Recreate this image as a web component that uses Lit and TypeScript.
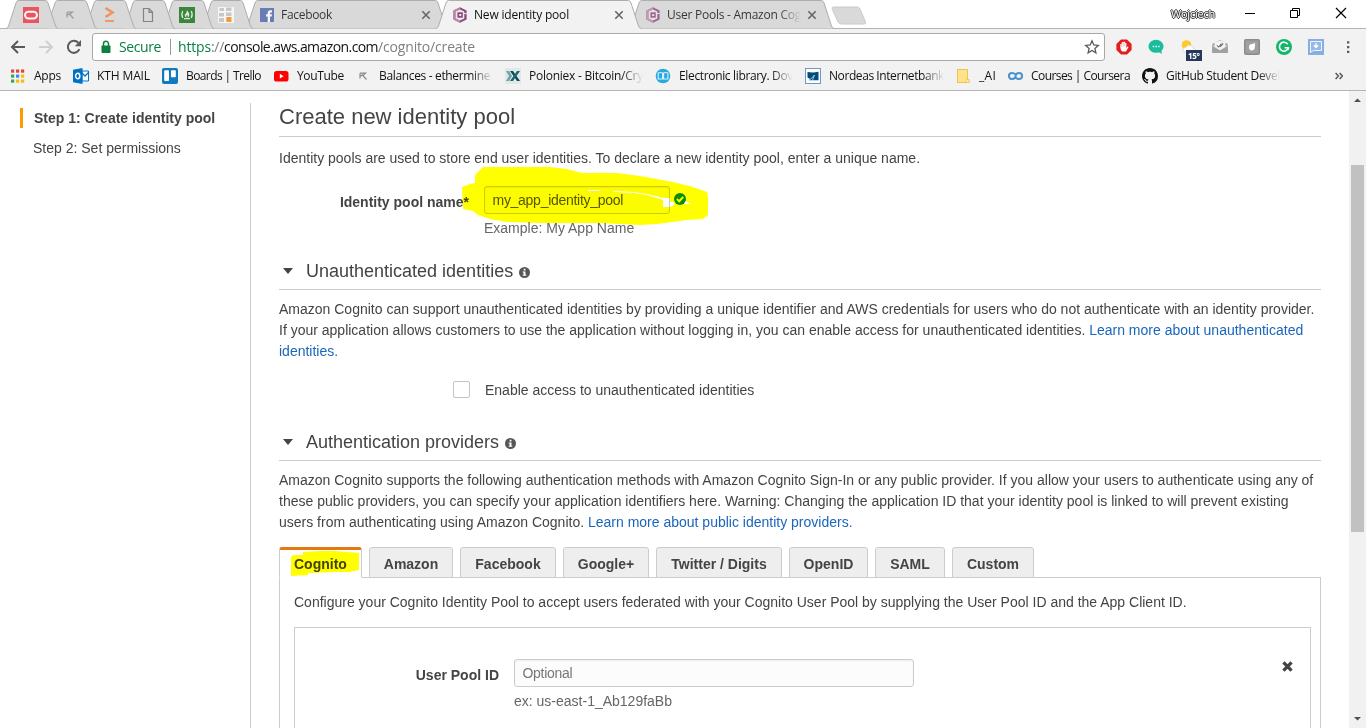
import { LitElement, html, css, svg, nothing, TemplateResult } from "lit";
import { customElement, property } from "lit/decorators.js";

/* Single-line label whose tracking is adjusted so that it spans a given width. */
@customElement("fit-label")
class FitLabel extends LitElement {
  static styles = css`
    :host { display: inline-block; white-space: pre; overflow: visible; }
    :host([fade]) {
      -webkit-mask-image: linear-gradient(to right, #000 calc(100% - 22px), transparent);
      mask-image: linear-gradient(to right, #000 calc(100% - 22px), transparent);
    }
  `;
  @property() text = "";
  @property({ type: Number }) width = 0;
  firstUpdated() {
    const s = this.renderRoot.querySelector("span") as HTMLElement;
    const natural = s.getBoundingClientRect().width;
    s.style.letterSpacing = (this.width - natural) / this.text.length + "px";
    this.style.width = this.width + "px";
  }
  render() {
    return html`<span>${this.text}</span>`;
  }
}

const cognito = svg`
  <path d="M8 .2 14.600 3.400V12.600L8 15.800 1.400 12.600V3.400Z" fill="#8a4a78"/>
  <path d="M8 .2 1.400 3.400V12.600L8 15.800V13.400L4 11.600V4.400L8 2.600Z" fill="#b98aab"/>
  <path d="M8 2.600 12.300 4.500V6H14.600V7H12.300V11.500L8 13.400 3.900 11.500V4.500Z" fill="#f0e4ec"/>
  <path d="M5.400 5.300H10.800V10.700H5.400Z" fill="#8a4a78"/>
  <path d="M7.200 7H9.200V9H7.200Z" fill="#f0e4ec"/>`;

const pick = svg`
  <path d="M5 5.200H10.500L7.800 7.500 11.500 11.500M5 5.200V10.500M5 8.500 7.800 6.500" fill="none" stroke="#8a8a8a" stroke-width="1.200"/>`;

const icons: Record<string, TemplateResult> = {
  oracle: svg`<rect width="16" height="16" fill="#f0303c"/><rect x="2" y="4.700" width="12" height="6.800" rx="3.400" fill="none" stroke="#fff" stroke-width="2"/>`,
  pick,
  prompt: svg`<path d="M4.500 1 11.500 5.500 4.500 10" fill="none" stroke="#f7803c" stroke-width="2.600"/><path d="M4 14H13" stroke="#f7803c" stroke-width="1.800"/>`,
  file: svg`<path d="M3.500 1.500H9L12.500 5V14.500H3.500ZM9 1.500V5.300H12.500" fill="none" stroke="#6b6b6b" stroke-width="1.200"/>`,
  camp: svg`<rect width="16" height="16" fill="#0f700f"/><path d="M3.800 4Q1.800 7.500 3.800 11M12.200 4Q14.200 7.500 12.200 11M5 11.700H11" fill="none" stroke="#dff0df" stroke-width="1.200"/><path d="M8 3.200Q10.800 6.400 10.200 8.800 9.700 10.400 8.600 10.600 9.500 9 8 7.800 6.800 9 7.400 10.600 5.500 10 5.700 7.800 7.800 6.500 8 3.200Z" fill="#dff0df"/>`,
  cubes: svg`<rect x="0" y="0" width="16" height="16" fill="#fff"/><path d="M1.500 1H6V4H1.500ZM8 .5H13.500V4H8ZM1 6H6V9.500H1ZM8 5.500H13.500V9H8ZM1 11H6V15H1Z" fill="#c4c4c4"/><rect x="8.300" y="10" width="5.200" height="5" fill="#f98c10"/>`,
  facebook: svg`<rect x="1" y="1" width="14" height="14" fill="#4a62ac"/><path d="M8.700 15V9.500H7V7.300H8.700V5.800Q8.700 3.300 11.200 3.300H13V5.400H11.900Q11 5.400 11 6.300V7.300H13L12.700 9.500H11V15Z" fill="#fff"/>`,
  cognito,
  apps: svg`${[0, 1, 2].map((r) => [0, 1, 2].map((c) => svg`<rect x="${1 + c * 5}" y="${1.5 + r * 5}" width="3.200" height="3.200" fill="${[["#ea4335", "#ea4335", "#ea4335"], ["#34a853", "#4285f4", "#fbbc05"], ["#34a853", "#fbbc05", "#fbbc05"]][r][c]}"/>`))}`,
  outlook: svg`<path d="M9 3H15.500V13H9Z" fill="#fff" stroke="#0072c6"/><path d="M9 5 12 8 16 4" fill="none" stroke="#0072c6" stroke-width="1.300"/><path d="M0 1.800 9.500 0V16L0 14.200Z" fill="#0072c6"/><ellipse cx="4.700" cy="8" rx="2.100" ry="2.700" fill="none" stroke="#fff" stroke-width="1.500"/>`,
  trello: svg`<rect width="16" height="16" rx="2" fill="#0f7abf"/><rect x="2.200" y="2.200" width="4.800" height="10.800" rx=".8" fill="#fff"/><rect x="9" y="2.200" width="4.800" height="7" rx=".8" fill="#fff"/>`,
  youtube: svg`<rect x="1" y="3" width="14.500" height="10.500" rx="2.600" fill="#f00"/><path d="M6.800 5.800 10.600 8.200 6.800 10.600Z" fill="#fff"/>`,
  polo: svg`<rect width="16" height="16" fill="#dfe9ea"/><path d="M1 3H4L7 8 4 13H1L4 8Z" fill="#6fa3a4"/><path d="M5 3H8L15 13H12Z" fill="#0c4a50"/><path d="M12 3H15L8 13H5Z" fill="#19666b"/>`,
  library: svg`<circle cx="8" cy="8" r="7.300" fill="#2aa9e0"/><path d="M3.200 5Q5.500 4 7.600 5V11H3.200ZM8.600 5Q10.700 4 12.900 5V11H8.600Z" fill="none" stroke="#d8f1fb" stroke-width="1.100"/>`,
  nordea: svg`<rect x=".5" y=".5" width="15" height="15" fill="#fff" stroke="#7098c0"/><path d="M2.500 4Q8 5 13.500 3.800V12.300H3.800L5 11 2.500 9.500Z" fill="#004b80"/><path d="M3 11 5.500 11.300 9.500 7 7.500 12.300" fill="none" stroke="#cfe0ee" stroke-width=".8"/>`,
  folder: svg`<path d="M2.500 1.500H12.500V11.500H14V14.500H2.500Z" fill="#ffe38a" stroke="#edc34c"/><path d="M11 11.500H14V14.500H11Z" fill="#ffe9a3" stroke="#edc34c" stroke-width=".7"/>`,
  coursera: svg`<path d="M8.700 6.400Q7 4.900 5 4.900A3.100 3.100 0 0 0 5 11.100Q6.800 11.100 8.200 9.300 L9 6.900Q9.800 4.900 12 4.900A3 3 0 0 1 12 11.100Q10 11.100 8.600 9.400" fill="none" stroke="#4c92cf" stroke-width="2"/>`,
  github: svg`<path fill="#111" d="M8 0C3.580 0 0 3.580 0 8c0 3.540 2.290 6.530 5.470 7.590.4.070.55-.17.55-.38 0-.19-.01-.82-.01-1.490-2.010.37-2.530-.49-2.690-.94-.09-.23-.48-.94-.82-1.130-.28-.15-.68-.52-.01-.53.63-.01 1.080.58 1.230.82.72 1.210 1.870.87 2.330.66.07-.52.28-.87.51-1.070-1.780-.2-3.640-.89-3.640-3.950 0-.87.31-1.590.82-2.150-.08-.2-.36-1.020.08-2.120 0 0 .67-.21 2.200.82.64-.18 1.320-.27 2-.27s1.360.09 2 .27c1.530-1.040 2.200-.82 2.200-.82.44 1.100.16 1.920.08 2.120.51.56.82 1.270.82 2.150 0 3.070-1.870 3.750-3.650 3.950.29.25.54.73.54 1.480 0 1.070-.01 1.930-.01 2.200 0 .21.15.46.55.38A8.010 8.010 0 0 0 16 8c0-4.420-3.580-8-8-8z"/>`,
  back: svg`<path d="M15 8H2.500M8 2 2 8 8 14" fill="none" stroke="#5a5a5a" stroke-width="2"/>`,
  forward: svg`<path d="M1 8H13.500M8 2 14 8 8 14" fill="none" stroke="#cfcfcf" stroke-width="2"/>`,
  reload: svg`<path d="M13.400 10.200A6 6 0 1 1 12.300 3.800" fill="none" stroke="#5a5a5a" stroke-width="2"/><path d="M15 1V7.200H8.800Z" fill="#5a5a5a"/>`,
  lock: svg`<rect x="3.500" y="6.500" width="9" height="7.500" rx=".8" fill="#0b8043"/><path d="M5.500 7V4.800A2.500 2.500 0 0 1 10.500 4.800V7" fill="none" stroke="#0b8043" stroke-width="1.500"/>`,
  star: svg`<path d="M8 1.800 9.800 6 14.300 6.400 10.900 9.400 11.900 13.900 8 11.500 4.100 13.900 5.100 9.400 1.700 6.400 6.200 6Z" fill="none" stroke="#5a5a5a" stroke-width="1.300"/>`,
  adblock: svg`<path d="M5 .4H11L15.600 5V11L11 15.600H5L.4 11V5Z" fill="#e31e1e"/><path d="M4.300 8V5.200Q5.200 4.200 5.700 5.200V3.500Q6.600 2.500 7.300 3.500V3Q8.200 2.200 8.900 3V4Q9.800 3.200 10.400 4.200V9L11.600 7.600Q12.800 7.500 12.300 8.600L10 12.600H6.200Q4.300 11 4.300 8Z" fill="#fff"/><path d="M5.700 5V8M7.300 4V7.500M8.900 4V7.500" stroke="#e88" stroke-width=".5"/>`,
  chat: svg`<ellipse cx="8" cy="7.300" rx="7.500" ry="6.500" fill="#1abc9c"/><path d="M9 12 14 15 12.500 9Z" fill="#1abc9c"/><path d="M4.700 6.700H6.300V8.300H4.700ZM7.400 6.700H9V8.300H7.400ZM10.100 6.700H11.700V8.300H10.100Z" fill="#d9f7ef"/>`,
  mail: svg`<path d="M.3 5 8 1 15.700 5V14H.3Z" fill="#9a9a9a"/><path d="M2.500 3.500 8 1.500 13.500 3.500V8L8 11.500 2.500 8Z" fill="#f3f3f3"/><path d="M4.800 6.300 6.700 8 9.500 4.500M8 7.800 11.200 4.500" fill="none" stroke="#777" stroke-width="1.100"/><path d="M.3 6.500 8 11 15.700 6.500V14H.3Z" fill="#a0a0a0"/><path d="M.5 6.500 8 11 15.500 6.500" stroke="#eee" fill="none" stroke-width=".8"/>`,
  leaf: svg`<rect width="16" height="16" rx="2" fill="#8b8b8b"/><rect x="1.500" y="1.500" width="13" height="13" rx="1" fill="#a0a0a0"/><path d="M5.200 9.800Q4.300 5 8 5 10 4.500 11 4 11.800 11.800 7.300 11.500 5.700 11.300 5.200 9.800Z" fill="#fff"/>`,
  grammar: svg`<circle cx="8" cy="8" r="8" fill="#12b76a"/><path d="M11.700 5.200A4.500 4.500 0 1 0 12.300 8.800H8.600" fill="none" stroke="#fff" stroke-width="1.600"/><path d="M10.600 8.800 12.800 11.200 13.300 8.600Z" fill="#fff"/>`,
  download: svg`<rect width="16" height="16" fill="#87aee0"/><path d="M2.500 2.500H13.500V11.500H5.500L2.500 13.500Z" fill="#95b8e6" stroke="#f0f6fd"/><path d="M8 4V8M5.800 6.300 8 8.500 10.200 6.300" fill="none" stroke="#fff" stroke-width="1.300"/>`,
  dots: svg`<path d="M7 2.300H9.300V4.600H7ZM7 7H9.300V9.300H7ZM7 11.700H9.300V14H7Z" fill="#5a5a5a"/>`,
  info: svg`<circle cx="8" cy="8" r="8" fill="#555"/><path d="M6.800 2.700H9.400V5H6.800ZM5.300 6.400H9.400V11.200H10.700V12.900H5.300V11.200H6.600V8H5.300Z" fill="#fff"/>`,
  cross: svg`<path d="M3 3 13 13M13 3 3 13" stroke="#444" stroke-width="4"/>`,
  tabclose: svg`<path d="M4.300 4.300 11.700 11.700M11.700 4.300 4.300 11.700" stroke="#666" stroke-width="1.600"/>`,
  check: svg`<circle cx="8" cy="8" r="8" fill="#0a8f1c"/><path d="M3.800 8 7 11 12.300 5.200" fill="none" stroke="#fff" stroke-width="2.600"/>`,
};

const icon = (name: string, cls = "i16") =>
  html`<svg class="ic ${cls}" viewBox="0 0 16 16">${icons[name]}</svg>`;

interface Tab { icon: string; w: number; kind: string; title?: string; tw?: number; fade?: boolean; active?: boolean }
const tabs: Tab[] = [
  ...["oracle", "pick", "prompt", "file", "camp", "cubes"].map((icon) => ({ icon, w: 52, kind: "pinned" })),
  { icon: "facebook", w: 203, kind: "wide first", title: "Facebook", tw: 51 },
  { icon: "cognito", w: 205, kind: "wide active", title: "New identity pool", tw: 95, active: true },
  { icon: "cognito", w: 205, kind: "wide", title: "User Pools - Amazon Cog", tw: 134, fade: true },
];

const bookmarks: [string, string, number, number, boolean][] = [
  ["apps", "Apps", 63, 27, false],
  ["outlook", "KTH MAIL", 89, 53, false],
  ["trello", "Boards | Trello", 111, 75, false],
  ["youtube", "YouTube", 82, 47, false],
  ["pick", "Balances - ethermine.", 150, 114, true],
  ["polo", "Poloniex - Bitcoin/Cry", 150, 114, true],
  ["library", "Electronic library. Dov", 150, 114, true],
  ["nordea", "Nordeas Internetbank", 150, 115, true],
  ["folder", "_AI", 52, 17, false],
  ["coursera", "Courses | Coursera", 135, 99, false],
  ["github", "GitHub Student Devel", 150, 114, true],
];

@customElement("browser-chrome")
class BrowserChrome extends LitElement {
  static styles = css`
    :host { display: block; height: 91px; background: #f2f2f2; border-bottom: 1px solid #b4b4b4; box-sizing: border-box;
      font: 12px/16px "Open Sans", "Noto Sans", sans-serif; color: #111; }
    .ic { display: block; flex: none; overflow: visible; }
    .i16 { width: 16px; height: 16px; }
    .strip { display: flex; height: 29px; background: #fff; padding-left: 6px; box-sizing: border-box; border-bottom: 1px solid #b4b4b4; }
    .tab { position: relative; flex: none; height: 29px; margin-right: -13px; display: flex; align-items: center; padding: 1px 17px 0; box-sizing: border-box; }
    .wide { margin-right: -12px; padding: 1px 14px 0 16px; }
    .first { margin-left: 5px; padding-left: 14px; }
    .shape { position: absolute; left: 0; top: 0; width: 100%; height: 29px; overflow: visible; }
    .tab .ic { position: relative; }
    .dim { opacity: .78; }
    .title { position: relative; margin-left: 6px; }
    .dimtext { opacity: .82; }
    .grow { flex: 1; }
    .plus { width: 36px; height: 19px; margin: 6px 0 0 9px; }
    .user { font-size: 11px; line-height: 28px; color: #fff; text-shadow: 1px 0 #333, -1px 0 #333, 0 1px #333, 0 -1px #333; margin-right: 29px; }
    .win { width: 107px; height: 28px; margin-right: 15px; }
    .bar { display: flex; align-items: center; height: 36px; padding: 0 10px; box-sizing: border-box; }
    .bar > .nav { margin-right: 12px; }
    .omni { width: 1013px; height: 28px; box-sizing: border-box; border: 1px solid #a8a8a8; border-radius: 3px; background: #fff; display: flex; align-items: center; padding: 0 4px 0 5px; margin-right: 11px; margin-left: -2px; font-size: 14px; line-height: 20px; }
    .green { color: #0b8043; }
    .gray { color: #808080; }
    .sec { margin-left: 5px; }
    .rule { width: 1px; height: 16px; background: #999; margin: 0 7px 0 9px; }
    .exts { display: flex; gap: 16px; align-items: center; }
    .weather { width: 22px; height: 22px; margin: 6px -6px 0 0; display: block; }
    .deg { font: bold 8px "Open Sans", sans-serif; fill: #fff; }
    .dots { margin-left: 16px; }
    .marks { display: flex; height: 25px; align-items: center; padding: 0 0 3px 10px; box-sizing: border-box; }
    .mark { display: flex; gap: 8px; align-items: center; flex: none; }
    .more { width: 8px; height: 8px; margin-left: 43px; }
  `;
  private tab(t: Tab, i: number) {
    const w = t.w;
    const edge = `M0 28.500 C1.500 28.500 2 27 2.500 26 L10 3 Q10.800 0.500 12.500 0.500 H${w - 12.5} Q${w - 10.8} 0.500 ${w - 10} 3 L${w - 2.5} 26 Q${w - 1.5} 28.500 ${w} 28.500`;
    return html`<div class="tab ${t.kind}" style="width:${w}px;z-index:${t.active ? 20 : 10 - i}">
      <svg class="shape" viewBox="0 0 ${w} 29">
        ${t.active ? svg`<path d="${edge} V30 H0 Z" fill="#f2f2f2"/>` : nothing}
        <path d="${edge}" fill="${t.active ? "none" : "#d9d9d9"}" stroke="#adadad"/>
      </svg>
      <span class="${t.active ? "" : "dim"}">${icon(t.icon)}</span>
      ${t.title ? html`<fit-label class="title ${t.active ? "" : "dimtext"}" .text=${t.title} .width=${t.tw!} ?fade=${!!t.fade}></fit-label>
        <span class="grow"></span>${icon("tabclose")}` : nothing}
    </div>`;
  }
  render() {
    return html`
      <div class="strip">
        ${tabs.map((t, i) => this.tab(t, i))}
        <svg class="plus" viewBox="0 0 36 19"><path d="M2.500 1H26.500Q28 1 29 3L34.500 16Q35 18 33 18H10.500Q8 18 7 16L1.200 3Q.8 1 2.500 1Z" fill="#d9d9d9" stroke="#cacaca"/></svg>
        <span class="grow"></span>
        <fit-label class="user" .text=${"Wojciech"} .width=${44}></fit-label>
        <svg class="win" viewBox="0 0 107 28"><path d="M1 13.500H11" stroke="#000"/><path d="M46.500 10.500H53.500V17.500H46.500ZM48.500 10V8.500H55.500V15.500H54" fill="none" stroke="#000"/><path d="M92 8 102 18M102 8 92 18" stroke="#000" stroke-width="1.200"/></svg>
      </div>
      <div class="bar">
        ${icon("back", "i16 nav")}${icon("forward", "i16 nav")}${icon("reload", "i16 nav")}
        <div class="omni">
          ${icon("lock")}
          <fit-label class="green sec" .text=${"Secure"} .width=${42}></fit-label>
          <span class="rule"></span>
          <fit-label class="green" .text=${"https"} .width=${33}></fit-label><fit-label class="gray" .text=${"://"} .width=${13}></fit-label><fit-label .text=${"console.aws.amazon.com"} .width=${154}></fit-label><fit-label class="gray" .text=${"/cognito/create"} .width=${97}></fit-label>
          <span class="grow"></span>${icon("star")}
        </div>
        <div class="exts">
          ${icon("adblock")}${icon("chat")}
          <svg class="weather" viewBox="0 0 22 22"><circle cx="6.500" cy="6" r="4.800" fill="#ffc928"/><path d="M3 11Q3 8 6 8.300 7.500 5 10.500 6.500 13 7 13.500 9.500 16.500 9.500 16 13H4Q2 13 3 11Z" fill="#fafafa" stroke="#ccc" stroke-width=".6"/><rect x="6" y="11" width="16" height="11" fill="#263859"/><text class="deg" x="8" y="19.500" textLength="12">15°</text></svg>
          ${icon("mail")}${icon("leaf")}${icon("grammar")}${icon("download")}
        </div>
        ${icon("dots", "i16 dots")}
      </div>
      <div class="marks">
        ${bookmarks.map(([ic, text, w, tw, fade]) => html`<div class="mark" style="width:${w}px">${icon(ic)}<fit-label .text=${text} .width=${tw} ?fade=${fade}></fit-label></div>`)}
        <svg class="more" viewBox="0 0 8 8"><path d="M.6 1 3.400 4 .6 7M4.600 1 7.400 4 4.600 7" fill="none" stroke="#555" stroke-width="1.500"/></svg>
      </div>`;
  }
}

const providers: [string, number][] = [
  ["Cognito", 83], ["Amazon", 84], ["Facebook", 96], ["Google+", 86],
  ["Twitter / Digits", 126], ["OpenID", 79], ["SAML", 70], ["Custom", 82],
];

@customElement("app-root")
class AppRoot extends LitElement {
  static styles = css`
    :host { display: block; width: 1366px; height: 728px; overflow: hidden; background: #fff;
      font: 14px/21px "Liberation Sans", Arial, sans-serif; color: #444; }
    .page { display: flex; height: 637px; }
    .side { width: 250px; flex: none; padding-top: 17px; box-sizing: border-box; }
    .step { padding-left: 33px; line-height: 20px; margin-bottom: 10px; height: 20px; }
    .current { margin-left: 20px; padding-left: 11px; border-left: 3px solid #f90; font-weight: bold; }
    .main { flex: 1; margin-top: 12px; border-left: 1px solid #ccc; padding: 0 28px; min-width: 0; }
    h1 { margin: 0; height: 33px; border-bottom: 1px solid #ccc; font-weight: normal; font-size: 22px; line-height: 27px; }
    p { margin: 0; }
    .intro { padding-top: 11px; }
    .ic { display: block; flex: none; }
    .row { display: flex; position: relative; }
    .label { width: 190px; text-align: right; font-weight: bold; line-height: 28px; padding-top: 2px; height: 26px; flex: none; white-space: nowrap; }
    .name { margin-top: 17px; height: 53px; }
    .input { box-sizing: border-box; height: 28px; line-height: 27px; letter-spacing: -.28px; border: 1px solid #ccc; border-radius: 3px; background: #fcfcfc; padding: 0 7.500px; box-shadow: inset 0 1px 2px rgba(0,0,0,.06); }
    .poolname { width: 186px; color: #555; }
    .field { margin-left: 15px; }
    .hint { color: #666; padding-top: 4px; }
    .ok { width: 12px; height: 12px; margin: 7px 0 0 4px; }
    .mark { position: absolute; overflow: visible; mix-blend-mode: multiply; pointer-events: none; z-index: 2; }
    .m1 { left: 183px; top: -19px; width: 246px; height: 60px; }
    .m2 { left: 11px; top: 3px; width: 70px; height: 27px; }
    .sec { display: flex; align-items: center; border-bottom: 1px solid #ccc; font-size: 18px; height: 37px; box-sizing: border-box; padding-left: 4px; margin-bottom: 9px; }
    .s1 { margin-top: 14px; }
    .s2 { margin-top: 23px; }
    .tri { width: 10px; height: 6px; margin-right: 13px; }
    .info { width: 11px; height: 11px; margin: 2px 0 0 6px; }
    a { color: #1a66bb; text-decoration: none; }
    .enable { display: flex; margin-top: 18px; padding-left: 174px; line-height: 21px; }
    .box { width: 17px; height: 17px; box-sizing: border-box; border: 1px solid #c4c4c4; border-radius: 2px; background: #fff; margin: 1px 15px 0 0; }
    .tabs { display: flex; gap: 7px; margin-top: 14px; height: 31px; position: relative; }
    .ptab { box-sizing: border-box; height: 31px; border: 1px solid #ccc; border-radius: 3px 3px 0 0; background: #eee; font-weight: bold; text-align: center; line-height: 33px; white-space: nowrap; }
    .on { background: #fff; border-top: 3px solid #e47911; border-bottom-color: #fff; line-height: 29px; text-align: left; padding-left: 14px; z-index: 1; position: relative; }
    .panel { border: 1px solid #ccc; margin-top: -1px; height: 200px; padding: 14px 9px 0 14px; }
    .inner { border: 1px solid #ccc; margin-top: 14px; height: 150px; padding-top: 31px; display: flex; }
    .inner .label { width: 204px; }
    .opt { width: 400px; color: #777; }
    .close { width: 13px; height: 13px; margin: 1px 16px 0 auto; }
    .bar { width: 17px; flex: none; background: #f1f1f1; display: flex; flex-direction: column; align-items: center; }
    .up { width: 17px; height: 17px; }
    .thumb { width: 13px; height: 367px; margin-top: 57px; background: #c1c1c1; }
    .gap { flex: 1; }
  `;
  private heading(text: string, cls: string) {
    return html`<div class="sec ${cls}"><svg class="tri" viewBox="0 0 10 6"><path d="M0 0H10L5 6Z" fill="#444"/></svg><span>${text}</span>${icon("info", "info")}</div>`;
  }
  render() {
    return html`
      <browser-chrome></browser-chrome>
      <div class="page">
        <div class="side">
          <div class="step current">Step 1: Create identity pool</div>
          <div class="step">Step 2: Set permissions</div>
        </div>
        <div class="main">
          <h1>Create new identity pool</h1>
          <p class="intro">Identity pools are used to store end user identities. To declare a new identity pool, enter a unique name.</p>
          <div class="row name">
            <div class="label">Identity pool name*</div>
            <div class="field"><div class="input poolname">my_app_identity_pool</div><div class="hint">Example: My App Name</div></div>
            ${icon("check", "ok")}
            <svg class="mark m1" viewBox="0 0 246 60"><path fill="#ff0" fill-rule="evenodd" d="M0 20 8 17 13 16V8L21 0H88L105 2 120 6H155L178 9 211 15 231 20 245 25 246 30V48L241 52 225 53 195 57 178 58 138 56H78L45 55 28 52 16 48 11 44 1 42Z M126 23H138V24H126Z M152 24 172 25 185 27 202 31H208V35L212 35 212 38 208 40H201V33L185 28 172 26 152 25Z M222 33 229 37H222Z"/></svg>
          </div>
          ${this.heading("Unauthenticated identities", "s1")}
          <p>Amazon Cognito can support unauthenticated identities by providing a unique identifier and AWS credentials for users who do not authenticate with an identity provider. If your application allows customers to use the application without logging in, you can enable access for unauthenticated identities. <a>Learn more about unauthenticated identities.</a></p>
          <div class="enable"><span class="box"></span>Enable access to unauthenticated identities</div>
          ${this.heading("Authentication providers", "s2")}
          <p>Amazon Cognito supports the following authentication methods with Amazon Cognito Sign-In or any public provider. If you allow your users to authenticate using any of these public providers, you can specify your application identifiers here. Warning: Changing the application ID that your identity pool is linked to will prevent existing users from authenticating using Amazon Cognito. <a>Learn more about public identity providers.</a></p>
          <div class="tabs">
            ${providers.map(([n, w], i) => html`<div class="ptab ${i === 0 ? "on" : ""}" style="width:${w}px">${n}</div>`)}
            <svg class="mark m2" viewBox="0 0 70 27"><path fill="#ff0" d="M1 7 3 5H13V2L30 1H46L69 3V20L60 22H46L18 23V25L1 26Z"/></svg>
          </div>
          <div class="panel">
            <p>Configure your Cognito Identity Pool to accept users federated with your Cognito User Pool by supplying the User Pool ID and the App Client ID.</p>
            <div class="inner">
              <div class="label">User Pool ID</div>
              <div class="field"><div class="input opt">Optional</div><div class="hint">ex: us-east-1_Ab129faBb</div></div>
              ${icon("cross", "close")}
            </div>
          </div>
        </div>
        <div class="bar">
          <svg class="up" viewBox="0 0 17 17"><path d="M5 11H12L8.500 7.500Z" fill="#505050"/></svg>
          <div class="thumb"></div><span class="gap"></span>
          <svg class="up" viewBox="0 0 17 17"><path d="M5 6H12L8.500 9.500Z" fill="#505050"/></svg>
        </div>
      </div>`;
  }
}
